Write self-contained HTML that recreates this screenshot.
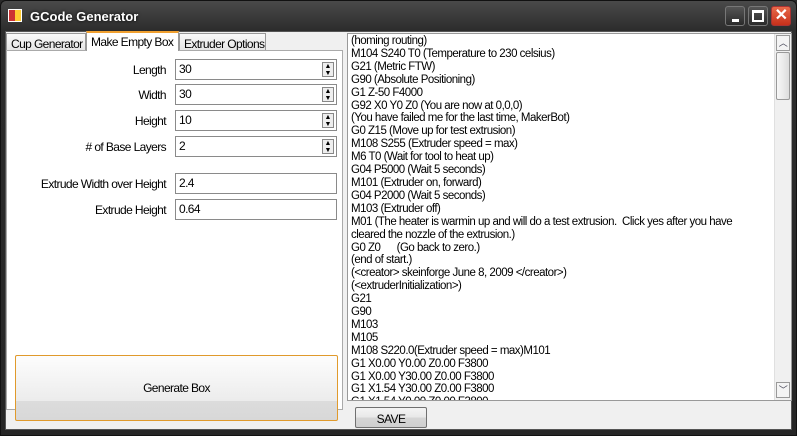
<!DOCTYPE html>
<html><head><style>
*{margin:0;padding:0;box-sizing:border-box}
body{width:797px;height:436px;overflow:hidden;background:#2a2a2a;font-family:"Liberation Sans",sans-serif;font-size:12px;letter-spacing:-0.6px;position:relative}
.abs{position:absolute}
#frame{left:0;top:0;width:797px;height:436px;background:linear-gradient(#4a4a4a,#2c2c2c 30px,#262626);border:1px solid #111;border-radius:6px 6px 0 0}
#title{left:30px;top:9px;color:#fff;font-weight:bold;font-size:13px;letter-spacing:0;text-shadow:0 0 3px #000}
#client{left:5px;top:31px;width:787px;height:399px;background:#f0f0f0;border:1px solid #555}
.tab{top:33px;height:18px;border:1px solid #999;border-bottom:none;background:linear-gradient(#fafafa,#e4e4e4);padding:3px 0 0 4px;font-size:12px;white-space:nowrap;overflow:hidden}
#panel{left:6px;top:50px;width:337px;height:360px;background:#fff;border:1px solid #aaa}
.lbl{text-align:right;width:160px;left:6px;white-space:nowrap}
.inp{left:175px;width:162px;height:21px;border:1px solid #8a8a8a;background:#fff;padding:2px 0 0 3px}
.spin{position:absolute;right:2px;top:2px;width:12px;height:15px;border:1px solid #888;background:#eee;font-size:7px;line-height:7px;text-align:center;letter-spacing:0}
#gen{left:15px;top:355px;width:323px;height:66px;border:1px solid #e09a2c;border-radius:2px;background:linear-gradient(#fdfdfd,#ececec 70%,#dcdcdc 70%,#d8d8d8);text-align:center;padding-top:25px}
#tb{left:347px;top:33px;width:445px;height:368px;background:#fff;border:1px solid #999;overflow:hidden}
#txt{left:3px;top:1px;line-height:12.9px;white-space:pre;color:#000;font-size:11.5px;letter-spacing:-0.5px}
#sb{right:0;top:0;width:17px;height:366px;background:#f0f0f0;border-left:1px solid #e0e0e0}
#save{left:355px;top:407px;width:72px;height:21px;border:1px solid #707070;border-radius:2px;background:linear-gradient(#f4f4f4,#e8e8e8 50%,#d6d6d6 50%,#cfcfcf);text-align:center;padding-top:4px}
.wb{top:6px;width:20px;height:20px;border:1px solid #777;border-radius:3px;background:linear-gradient(#555,#2a2a2a)}
</style></head><body>
<div id="frame" class="abs"></div>
<div class="abs" style="left:8px;top:9px;width:14px;height:13px;background:linear-gradient(90deg,#c33 50%,#fc3 50%);border:1px solid #fff"></div>
<div id="title" class="abs">GCode Generator</div>
<div class="abs wb" style="left:725px"><div class="abs" style="left:6px;top:12px;width:7px;height:3px;background:#fff"></div></div>
<div class="abs wb" style="left:748px"><div class="abs" style="left:3px;top:3px;width:12px;height:12px;border:2px solid #fff;border-top-width:3px"></div></div>
<div class="abs wb" style="left:771px;background:linear-gradient(#e86a4a,#c8301a);border-color:#a33;color:#fff;font-weight:bold;font-size:16px;text-align:center;line-height:18px">✕</div>
<div id="client" class="abs"></div>
<div class="abs tab" style="left:6px;width:80px">Cup Generator</div>
<div class="abs tab" style="left:179px;width:87px">Extruder Options</div>
<div id="panel" class="abs"></div>
<div class="abs tab" style="left:86px;top:31px;height:20px;width:93px;background:#fff;border-top:2px solid #f0a030;padding-top:2px">Make Empty Box</div>

<div class="abs lbl" style="top:63px">Length</div>
<div class="abs inp" style="top:59px">30<div class="spin">▲<br>▼</div></div>
<div class="abs lbl" style="top:88px">Width</div>
<div class="abs inp" style="top:84px">30<div class="spin">▲<br>▼</div></div>
<div class="abs lbl" style="top:114px">Height</div>
<div class="abs inp" style="top:110px">10<div class="spin">▲<br>▼</div></div>
<div class="abs lbl" style="top:140px"># of Base Layers</div>
<div class="abs inp" style="top:136px">2<div class="spin">▲<br>▼</div></div>
<div class="abs lbl" style="top:177px">Extrude Width over Height</div>
<div class="abs inp" style="top:173px">2.4</div>
<div class="abs lbl" style="top:203px">Extrude Height</div>
<div class="abs inp" style="top:199px">0.64</div>
<div id="gen" class="abs">Generate Box</div>

<div id="tb" class="abs"><div id="txt" class="abs">(homing routing)
M104 S240 T0 (Temperature to 230 celsius)
G21 (Metric FTW)
G90 (Absolute Positioning)
G1 Z-50 F4000
G92 X0 Y0 Z0 (You are now at 0,0,0)
(You have failed me for the last time, MakerBot)
G0 Z15 (Move up for test extrusion)
M108 S255 (Extruder speed = max)
M6 T0 (Wait for tool to heat up)
G04 P5000 (Wait 5 seconds)
M101 (Extruder on, forward)
G04 P2000 (Wait 5 seconds)
M103 (Extruder off)
M01 (The heater is warmin up and will do a test extrusion.  Click yes after you have
cleared the nozzle of the extrusion.)
G0 Z0      (Go back to zero.)
(end of start.)
(&lt;creator&gt; skeinforge June 8, 2009 &lt;/creator&gt;)
(&lt;extruderInitialization&gt;)
G21
G90
M103
M105
M108 S220.0(Extruder speed = max)M101
G1 X0.00 Y0.00 Z0.00 F3800
G1 X0.00 Y30.00 Z0.00 F3800
G1 X1.54 Y30.00 Z0.00 F3800
G1 X1.54 Y0.00 Z0.00 F3800</div>
<div id="sb" class="abs">
<div class="abs" style="left:1px;top:1px;width:14px;height:16px;border:1px solid #999;background:#f4f4f4;font-size:9px;text-align:center;color:#445">︿</div>
<div class="abs" style="left:1px;top:18px;width:14px;height:48px;border:1px solid #999;border-radius:2px;background:linear-gradient(90deg,#f8f8f8,#ddd)"></div>
<div class="abs" style="left:1px;top:348px;width:14px;height:16px;border:1px solid #999;background:#f4f4f4;font-size:9px;text-align:center;color:#445">﹀</div>
</div></div>
<div id="save" class="abs">SAVE</div>
</body></html>
